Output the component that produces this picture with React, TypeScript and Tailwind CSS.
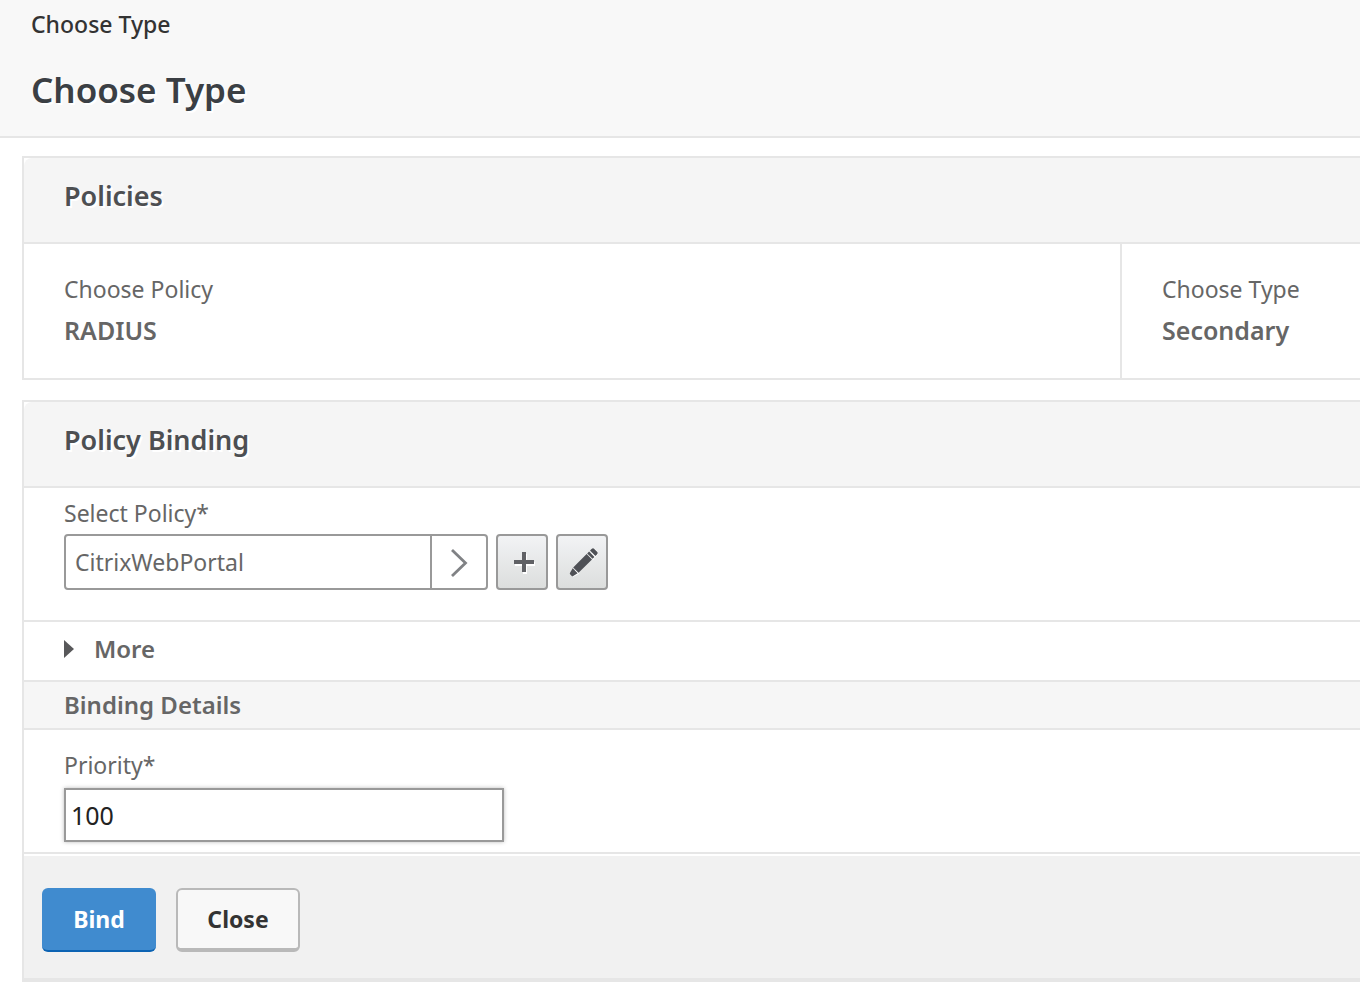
import { useState } from "react";
import type { ReactNode } from "react";

function Panel({ title, children }: { title: string; children: ReactNode }) {
  return (
    <section className="border-y-2 border-l-2 border-[#e6e6e6] bg-white">
      <h2 className="rounded-tl-lg border-b-2 border-[#e6e6e6] bg-[#f5f5f5] px-10 pt-5 pb-7 text-[27px] leading-9 font-semibold text-[#4d4f52] [text-shadow:2px_2px_0_#fff]">
        {title}
      </h2>
      {children}
    </section>
  );
}

function Fact({ label, value }: { label: string; value: string }) {
  return (
    <div className="px-10 pt-6 pb-7">
      <dt className="text-[23px] leading-[42px]">{label}</dt>
      <dd className="text-[25px] leading-10 font-semibold">{value}</dd>
    </div>
  );
}

const iconButton =
  "flex h-14 w-[52px] items-center justify-center rounded-sm border-2 border-[#999] bg-linear-to-b from-[#f2f3f5] to-[#dcdedd]";

export default function App() {
  const [policy, setPolicy] = useState("CitrixWebPortal");
  const [priority, setPriority] = useState("100");

  return (
    <div className="min-h-screen bg-white font-['Noto_Sans',sans-serif] text-[#666]">
      <header className="border-b-2 border-[#e6e6e6] bg-[#f8f8f8] px-[31px] pt-[6px] pb-5">
        <nav aria-label="Breadcrumb" className="text-[23px] leading-9 font-medium text-[#333]">
          Choose Type
        </nav>
        <h1 className="pt-[22px] text-[35px] leading-[52px] font-semibold text-[#3b3f44] [text-shadow:2px_2px_0_#fff]">
          Choose Type
        </h1>
      </header>

      <main className="flex flex-col gap-5 pt-[18px] pl-[22px]">
        <Panel title="Policies">
          <dl className="grid grid-cols-[1fr_238px] divide-x-2 divide-[#e6e6e6]">
            <Fact label="Choose Policy" value="RADIUS" />
            <Fact label="Choose Type" value="Secondary" />
          </dl>
        </Panel>

        <Panel title="Policy Binding">
          <div className="border-b-2 border-[#e6e6e6] px-10 pt-2 pb-[30px]">
            <label htmlFor="policy" className="mb-1 block text-[23px] leading-[34px]">
              Select Policy*
            </label>
            <div className="flex gap-2">
              <div className="flex h-14 w-[424px] rounded-sm border-2 border-[#999]">
                <input
                  id="policy"
                  value={policy}
                  onChange={(e) => setPolicy(e.target.value)}
                  className="min-w-0 flex-1 px-[9px] text-[23px] outline-none"
                />
                <button
                  type="button"
                  aria-label="Choose policy"
                  className="flex w-14 items-center justify-center border-l-2 border-[#999]"
                >
                  <svg width="18" height="30" viewBox="0 0 18 30" fill="none" stroke="#808285" strokeWidth="2.8">
                    <path d="M2 3 15.5 16 2 29" />
                  </svg>
                </button>
              </div>
              <button type="button" aria-label="Add policy" className={iconButton}>
                <svg width="26" height="26" viewBox="0 0 26 26" fill="none" strokeWidth="4">
                  <path d="M6 15h20M16 5v20" stroke="#fff" />
                  <path d="M5 13h20M15 3v20" stroke="#606165" />
                </svg>
              </button>
              <button type="button" aria-label="Edit policy" className={iconButton}>
                <svg width="32" height="32" viewBox="0 0 32 32">
                  <g transform="translate(2 0) rotate(-45 16 16)">
                    <path
                      d="M-2 17 4.5 15V21H24V15H33V20.5H25V21H4.5L-2 19Z"
                      fill="#fff"
                    />
                    <path
                      d="M-2.5 14.8Q-2.5 14 -1.5 13.8L3.5 12.5V19.5L-1.5 18.2Q-2.5 18 -2.5 17.2Z M4.5 12.2H23.5V19.8H4.5Z M24.3 12.2H27V19.8H24.3Z M28.3 12.2H30.5Q32.5 12.2 32.5 14V18Q32.5 19.8 30.5 19.8H28.3Z"
                      fill="#4f5156"
                    />
                  </g>
                </svg>
              </button>
            </div>
          </div>

          <button
            type="button"
            aria-expanded="false"
            className="flex w-full items-center gap-5 border-b-2 border-[#e6e6e6] px-10 pt-2 pb-3 text-2xl leading-[38px] font-semibold"
          >
            <svg width="10" height="18" viewBox="0 0 10 18" fill="#58585a">
              <path d="M0 0 10 9 0 18Z" />
            </svg>
            More
          </button>

          <h3 className="border-b-2 border-[#e6e6e6] bg-[#f6f6f6] px-10 pt-1 pb-1 text-2xl leading-[38px] font-semibold">
            Binding Details
          </h3>

          <div className="border-b-2 border-[#e6e6e6] px-10 pt-4 pb-[10px]">
            <label htmlFor="priority" className="mb-1 block text-[23px] leading-[38px]">
              Priority*
            </label>
            <input
              id="priority"
              value={priority}
              onChange={(e) => setPriority(e.target.value)}
              className="block h-[54px] w-[440px] border-2 border-[#999] px-[5px] text-[25px] text-[#222] shadow-[0_0_4px_#bbb] outline-none"
            />
          </div>

          <footer className="mt-[2px] flex gap-5 border-b-2 border-[#e6e6e6] bg-[#f1f1f1] px-[18px] pt-8 pb-[26px]">
            <button
              type="button"
              className="h-16 w-[114px] rounded-md border-b-2 border-[#0c63b3] bg-[#408bcf] text-[23px] font-bold text-white"
            >
              Bind
            </button>
            <button
              type="button"
              className="h-16 w-[124px] rounded-md border-2 border-b-4 border-[#b9b9b9] bg-[#f8f8f8] text-[23px] font-bold text-[#333]"
            >
              Close
            </button>
          </footer>
        </Panel>
      </main>
    </div>
  );
}
